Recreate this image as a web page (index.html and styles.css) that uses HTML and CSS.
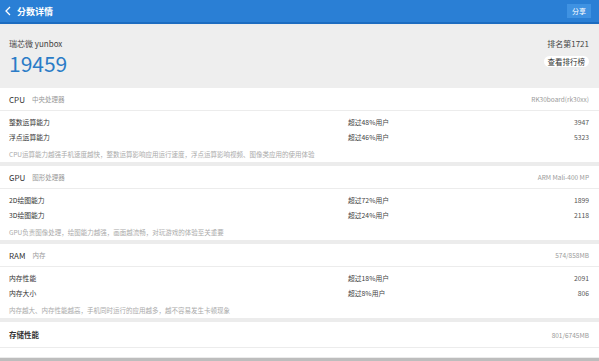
FILE: index.html
```html
<!DOCTYPE html>
<html>
<head>
<meta charset="utf-8">
<link rel="stylesheet" href="styles.css">
</head>
<body>
<div class="app">
  <header class="topbar">
    <div class="title">
      <svg class="back" width="6" height="10" viewBox="0 0 6 10"><path d="M5 1 L1 5 L5 9" fill="none" stroke="#fff" stroke-width="1.3"/></svg>
      <span>分数详情</span>
    </div>
    <span class="share">分享</span>
  </header>
  <section class="hero">
    <div class="hero-left">
      <div class="device">瑞芯微 yunbox</div>
      <div class="score">19459</div>
    </div>
    <div class="hero-right">
      <div class="rank">排名第1721</div>
      <span class="rank-btn">查看排行榜</span>
    </div>
  </section>

  <section class="card">
    <div class="card-head"><span class="name">CPU</span><span class="sub">中央处理器</span><span class="info">RK30board(rk30xx)</span></div>
    <div class="rows">
      <div class="row"><span>整数运算能力</span><span class="pct">超过48%用户</span><span class="val">3947</span></div>
      <div class="row"><span>浮点运算能力</span><span class="pct">超过46%用户</span><span class="val">5323</span></div>
    </div>
    <div class="desc">CPU运算能力越强手机速度越快，整数运算影响应用运行速度，浮点运算影响视频、图像类应用的使用体验</div>
  </section>

  <section class="card">
    <div class="card-head"><span class="name">GPU</span><span class="sub">图形处理器</span><span class="info">ARM Mali-400 MP</span></div>
    <div class="rows">
      <div class="row"><span>2D绘图能力</span><span class="pct">超过72%用户</span><span class="val">1899</span></div>
      <div class="row"><span>3D绘图能力</span><span class="pct">超过24%用户</span><span class="val">2118</span></div>
    </div>
    <div class="desc">GPU负责图像处理，绘图能力越强，画面越流畅，对玩游戏的体验至关重要</div>
  </section>

  <section class="card">
    <div class="card-head"><span class="name">RAM</span><span class="sub">内存</span><span class="info">574/858MB</span></div>
    <div class="rows">
      <div class="row"><span>内存性能</span><span class="pct">超过18%用户</span><span class="val">2091</span></div>
      <div class="row"><span>内存大小</span><span class="pct">超过8%用户</span><span class="val">806</span></div>
    </div>
    <div class="desc">内存越大、内存性能越高，手机同时运行的应用越多，越不容易发生卡顿现象</div>
  </section>

  <section class="card last">
    <div class="card-head"><span class="name strong">存储性能</span><span class="info">801/6745MB</span></div>
  </section>
  <div class="bottom-line"></div>
</div>
</body>
</html>
```

FILE: styles.css
```css
* { box-sizing: border-box; }
html, body { margin: 0; padding: 0; }
body {
  width: 599px;
  height: 361px;
  overflow: hidden;
  background: #ececec;
  font-family: "Noto Sans CJK SC", "Noto Sans", sans-serif;
  color: #333;
}
.app { display: flex; flex-direction: column; height: 361px; }

.topbar {
  height: 24px;
  background: #2a7fd5;
  border-bottom: 2px solid #1c6cc0;
  display: flex;
  align-items: center;
  justify-content: space-between;
  padding: 0 8px 0 5px;
  color: #fff;
}
.title { display: flex; align-items: center; gap: 6px; font-size: 9px; font-weight: 700; }
.back { display: block; }
.share {
  font-size: 7px;
  background: #3f92e2;
  padding: 2px 5px;
  line-height: 10px;
}

.hero {
  margin-top: 2px;
  height: 62px;
  background: #eeeeee;
  display: flex;
  justify-content: space-between;
  padding: 12px 10px 0 9px;
}
.device { font-size: 8px; color: #444; line-height: 12px; }
.score { font-size: 21px; color: #2b7cc7; line-height: 22px; margin-top: 2px; }
.hero-right { display: flex; flex-direction: column; align-items: flex-end; }
.rank { font-size: 8px; color: #444; line-height: 12px; }
.rank-btn {
  margin-top: 6px;
  font-size: 7.5px;
  line-height: 11px;
  background: #fff;
  color: #333;
  border-radius: 6px;
  padding: 0 4px;
}

.card {
  background: #fff;
  height: 74px;
  margin-bottom: 4px;
  display: flex;
  flex-direction: column;
}
.card-head {
  height: 23px;
  border-bottom: 1px solid #ececec;
  display: flex;
  align-items: center;
  padding: 0 10px 0 9px;
}
.name { font-size: 8px; color: #333; }
.name.strong { font-weight: 700; font-size: 7.5px; }
.sub { font-size: 6.5px; color: #999; margin-left: 7px; }
.info { margin-left: auto; font-size: 6.5px; color: #999; }

.rows { padding-top: 3px; }
.row {
  display: grid;
  grid-template-columns: 339px 1fr auto;
  height: 15px;
  align-items: center;
  padding: 0 10px 0 9px;
  font-size: 6.8px;
  color: #333;
}
.pct { color: #444; }
.val { color: #555; }
.desc {
  padding: 0 0 0 9px;
  margin-top: 3px;
  height: 15px;
  line-height: 15px;
  font-size: 6.5px;
  color: #aaa;
  white-space: nowrap;
}
.card.last { height: 35px; margin-bottom: 0; }
.card.last .card-head { height: 26px; }
.bottom-line { margin-top: auto; height: 3px; background: #bdbdbd; }
```
